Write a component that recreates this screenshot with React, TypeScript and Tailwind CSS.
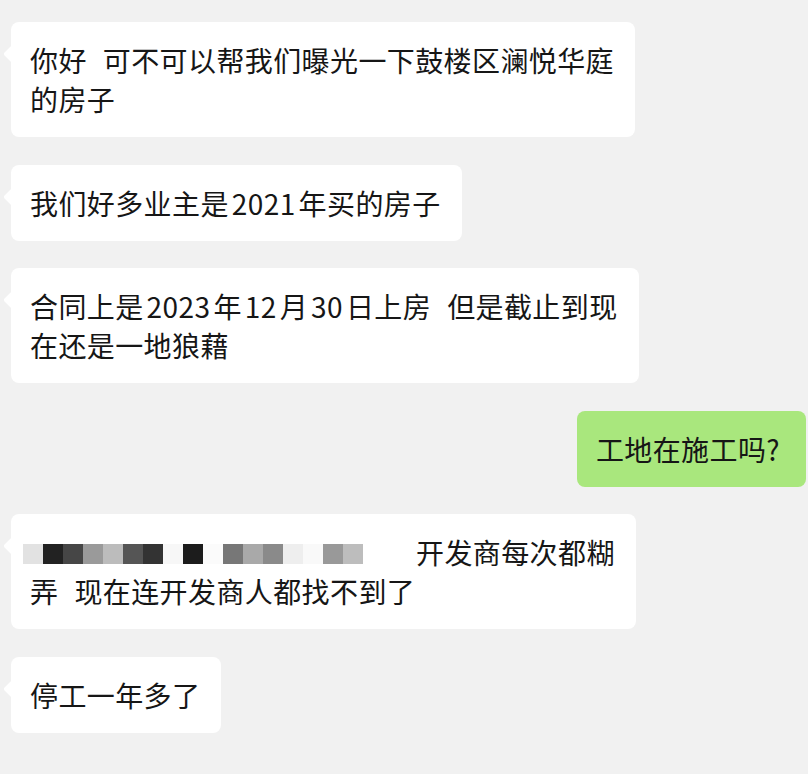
import React from 'react'

const font = { fontFamily: '"Noto Sans CJK SC", "Noto Sans", sans-serif' }

function Num({ children }: { children: React.ReactNode }) {
  return <span className="mx-[3px]">{children}</span>
}

function Gap() {
  return <span className="inline-block w-[16px]" />
}

function Bubble({ children, mine = false }: { children: React.ReactNode; mine?: boolean }) {
  return (
    <div className={mine ? 'flex justify-end' : 'flex justify-start'}>
      <div
        className={
          'relative rounded-[8px] pl-[19px] pt-[19px] pb-[18px] text-[28px] leading-[39px] text-[#161616] tracking-[0.4px] ' +
          (mine ? 'bg-[#a9e77d] pr-[26px]' : 'bg-white pr-[21px]')
        }
      >
        {!mine && (
          <span className="absolute left-[-5px] top-[25px] w-[14px] h-[14px] bg-white rotate-45 rounded-[2px]" />
        )}
        <div className="relative whitespace-nowrap">{children}</div>
      </div>
    </div>
  )
}

function Mosaic() {
  const cells = [
    '#e2e2e2', '#222222', '#464646', '#9a9a9a', '#bcbcbc', '#555555', '#333333', '#f7f7f7',
    '#1c1c1c', '#fbfbfb', '#777777', '#a9a9a9', '#8a8a8a', '#eeeeee', '#f9f9f9', '#999999', '#bdbdbd',
  ]
  return (
    <span className="inline-flex align-middle ml-[-7px] mr-[53px] mt-[-4px]">
      {cells.map((c, i) => (
        <span key={i} className="inline-block w-[20px] h-[20px]" style={{ backgroundColor: c }} />
      ))}
    </span>
  )
}

export default function App() {
  return (
    <div className="min-h-[774px] w-[808px] bg-[#f1f1f1] pl-[11px] pr-[2px] pt-[22px] pb-[20px]" style={font}>
      <div className="flex flex-col gap-[27.5px]">
        <Bubble>
          你好<Gap />可不可以帮我们曝光一下鼓楼区澜悦华庭
          <br />
          的房子
        </Bubble>
        <Bubble>
          我们好多业主是<Num>2021</Num>年买的房子
        </Bubble>
        <Bubble>
          合同上是<Num>2023</Num>年<Num>12</Num>月<Num>30</Num>日上房<Gap />但是截止到现
          <br />
          在还是一地狼藉
        </Bubble>
        <Bubble mine>工地在施工吗?</Bubble>
        <Bubble>
          <Mosaic />开发商每次都糊
          <br />
          弄<Gap />现在连开发商人都找不到了
        </Bubble>
        <Bubble>停工一年多了</Bubble>
      </div>
    </div>
  )
}
